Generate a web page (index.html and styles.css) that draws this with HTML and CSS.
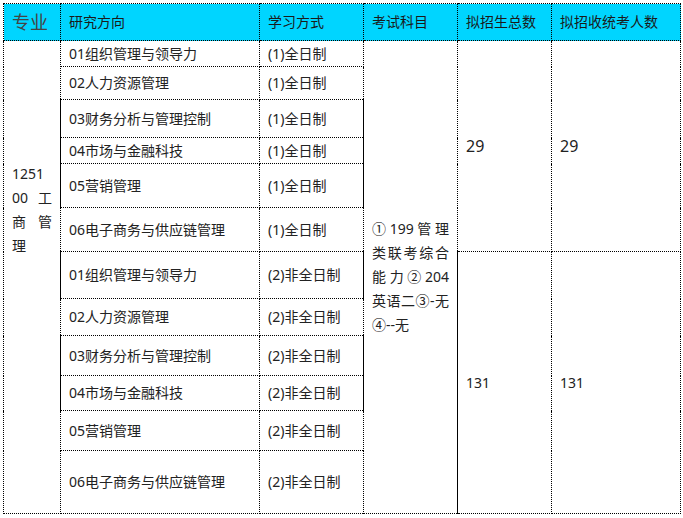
FILE: index.html
```html
<!DOCTYPE html>
<html lang="zh-CN">
<head>
<meta charset="utf-8">
<title>招生计划</title>
<link rel="stylesheet" href="styles.css">
</head>
<body>
<table class="plan">
  <colgroup>
    <col class="c-major"><col class="c-dir"><col class="c-mode"><col class="c-exam"><col class="c-total"><col class="c-unified">
  </colgroup>
  <thead>
    <tr class="head">
      <th class="major-h">专业</th>
      <th>研究方向</th>
      <th>学习方式</th>
      <th>考试科目</th>
      <th>拟招生总数</th>
      <th>拟招收统考人数</th>
    </tr>
  </thead>
  <tbody>
    <tr class="h26">
      <td class="major" rowspan="12">
        <span class="jl">1251</span><span class="jl">00工</span><span class="jl">商管</span><span class="ll">理</span>
      </td>
      <td class="dir">01组织管理与领导力</td>
      <td class="mode">(1)全日制</td>
      <td class="exam" rowspan="12">
        <span class="jl">①199管理</span><span class="jl">类联考综合</span><span class="jl">能力②204</span><span class="jl">英语二③-无</span><span class="ll">④--无</span>
      </td>
      <td class="num big" rowspan="6">29</td>
      <td class="num big" rowspan="6">29</td>
    </tr>
    <tr class="h33">
      <td class="dir">02人力资源管理</td>
      <td class="mode">(1)全日制</td>
    </tr>
    <tr class="h38 solid">
      <td class="dir">03财务分析与管理控制</td>
      <td class="mode">(1)全日制</td>
    </tr>
    <tr class="h26 solid">
      <td class="dir">04市场与金融科技</td>
      <td class="mode">(1)全日制</td>
    </tr>
    <tr class="h44 solid">
      <td class="dir">05营销管理</td>
      <td class="mode">(1)全日制</td>
    </tr>
    <tr class="h44">
      <td class="dir">06电子商务与供应链管理</td>
      <td class="mode">(1)全日制</td>
    </tr>
    <tr class="h47 solid">
      <td class="dir">01组织管理与领导力</td>
      <td class="mode">(2)非全日制</td>
      <td class="num edge" rowspan="6">131</td>
      <td class="num" rowspan="6">131</td>
    </tr>
    <tr class="h37">
      <td class="dir">02人力资源管理</td>
      <td class="mode">(2)非全日制</td>
    </tr>
    <tr class="h40 solid">
      <td class="dir">03财务分析与管理控制</td>
      <td class="mode">(2)非全日制</td>
    </tr>
    <tr class="h35 solid">
      <td class="dir">04市场与金融科技</td>
      <td class="mode">(2)非全日制</td>
    </tr>
    <tr class="h40">
      <td class="dir">05营销管理</td>
      <td class="mode">(2)非全日制</td>
    </tr>
    <tr class="h63">
      <td class="dir">06电子商务与供应链管理</td>
      <td class="mode">(2)非全日制</td>
    </tr>
  </tbody>
</table>
</body>
</html>
```

FILE: styles.css
```css
html, body {
  margin: 0;
  background: #fff;
}

body {
  padding: 3px;
  font-family: "Noto Sans", "Noto Sans CJK SC", sans-serif;
  font-size: 14px;
  color: #222;
}

.plan {
  border-collapse: collapse;
  table-layout: fixed;
  width: 677px;
}

.c-major { width: 57px; }
.c-dir { width: 199px; }
.c-mode { width: 104px; }
.c-exam { width: 94px; }
.c-total { width: 94px; }
.c-unified { width: 129px; }

.plan th,
.plan td {
  border: 1px dotted #000;
  padding: 0 8px;
  text-align: left;
  vertical-align: middle;
  line-height: 20px;
  font-weight: normal;
}

.head { height: 37px; }
.head th {
  background: #00d5ff;
  color: #1a1a1a;
}
.head .major-h {
  font-size: 18px;
  color: #444;
}

.h26 { height: 26px; }
.h33 { height: 33px; }
.h35 { height: 35px; }
.h37 { height: 37px; }
.h38 { height: 38px; }
.h40 { height: 40px; }
.h44 { height: 44px; }
.h47 { height: 47px; }
.h63 { height: 63px; }

.solid .dir { border-left: 1px solid #000; }
.solid .mode { border-right: 1px solid #000; }

.plan .major {
  vertical-align: top;
  padding-top: 121px;
  line-height: 24px;
}

.plan .exam {
  line-height: 24px;
}

.jl {
  display: block;
  text-align: justify;
  text-align-last: justify;
}

.ll {
  display: block;
}

.num.big { font-size: 16px; }
.plan .edge { border-left: 1px solid #000; }
```
